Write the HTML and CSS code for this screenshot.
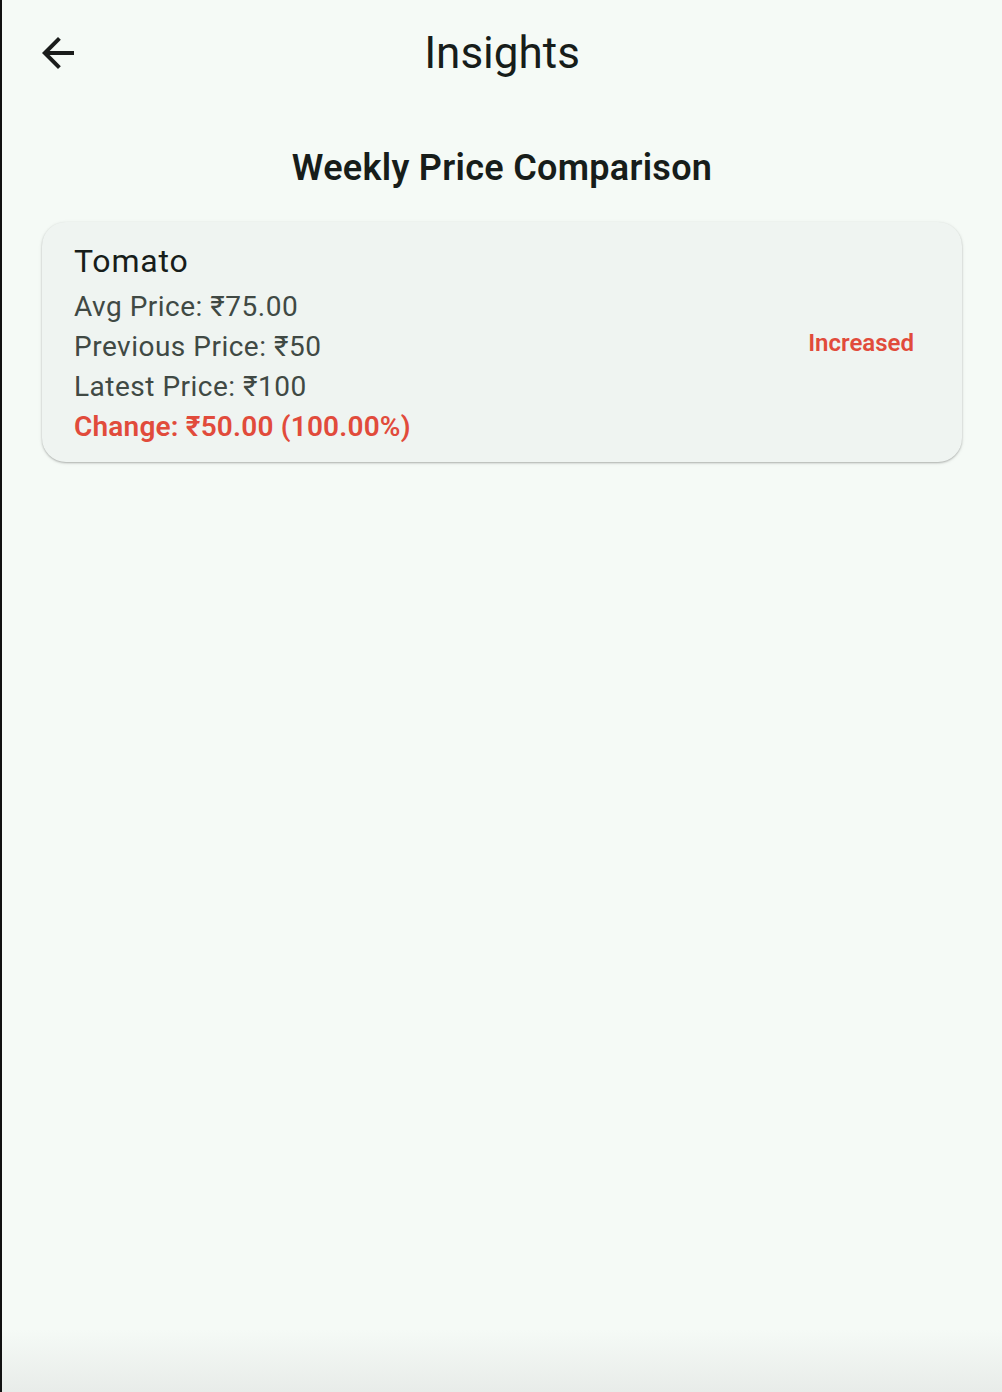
FILE: index.html
```html
<!DOCTYPE html>
<html lang="en">
<head>
<meta charset="utf-8">
<title>Insights</title>
<link rel="stylesheet" href="styles.css">
</head>
<body>
<div class="screen">
  <header class="appbar">
    <button class="back" aria-label="Back">
      <svg width="48" height="48" viewBox="0 0 24 24"><path d="M20 11H7.83l5.59-5.59L12 4l-8 8 8 8 1.41-1.41L7.83 13H20v-2z" fill="#1a1c1b"/></svg>
    </button>
    <h1 class="title">Insights</h1>
  </header>
  <main class="content">
    <h2 class="section-title">Weekly Price Comparison</h2>
    <div class="card">
      <div class="card-main">
        <div class="item-name">Tomato</div>
        <div class="line first">Avg Price: ₹75.00</div>
        <div class="line">Previous Price: ₹50</div>
        <div class="line">Latest Price: ₹100</div>
        <div class="line change">Change: ₹50.00 (100.00%)</div>
      </div>
      <div class="status">Increased</div>
    </div>
  </main>
</div>
</body>
</html>
```

FILE: styles.css
```css
html, body {
  margin: 0;
  padding: 0;
}
body {
  font-family: Roboto, "Noto Sans", sans-serif;
  background: linear-gradient(to bottom, #f5faf6 0, #f5faf6 1330px, #e8ece9 1392px);
  min-height: 1392px;
}
.screen {
  border-left: 2px solid #111;
  min-height: 1392px;
  box-sizing: border-box;
}
.appbar {
  height: 106px;
  display: flex;
  align-items: center;
  position: relative;
}
.back {
  width: 112px;
  height: 106px;
  border: 0;
  background: transparent;
  padding: 0;
  display: flex;
  align-items: center;
  justify-content: center;
}
.back svg { display: block; }
.title {
  flex: 1;
  margin: 0 112px 0 0;
  text-align: center;
  font-weight: 400;
  font-size: 44px;
  color: #171d1a;
}
.content {
  padding: 41px 40px 0;
}
.section-title {
  margin: 0;
  text-align: center;
  font-size: 36px;
  font-weight: 600;
  line-height: 42px;
  letter-spacing: 0.3px;
  color: #171d1a;
}
.card {
  margin-top: 33px;
  background: #eff4f1;
  border-radius: 24px;
  box-shadow: 0 1px 2px rgba(0,0,0,0.25), 0 1px 4px rgba(0,0,0,0.08);
  padding: 15px 48px 15px 32px;
  display: flex;
  align-items: center;
}
.card-main { flex: 1; }
.item-name {
  font-size: 32px;
  line-height: 48px;
  letter-spacing: 0.8px;
  color: #171d1a;
}
.line {
  font-size: 28px;
  line-height: 40px;
  letter-spacing: 0.5px;
  color: #404944;
}
.line.first {
  margin-top: 2px;
}
.change {
  color: #e14b3b;
  font-weight: 600;
  letter-spacing: 0.2px;
}
.status {
  font-size: 24px;
  font-weight: 600;
  color: #e14b3b;
  letter-spacing: 0;
  margin-top: 2px;
}
```
